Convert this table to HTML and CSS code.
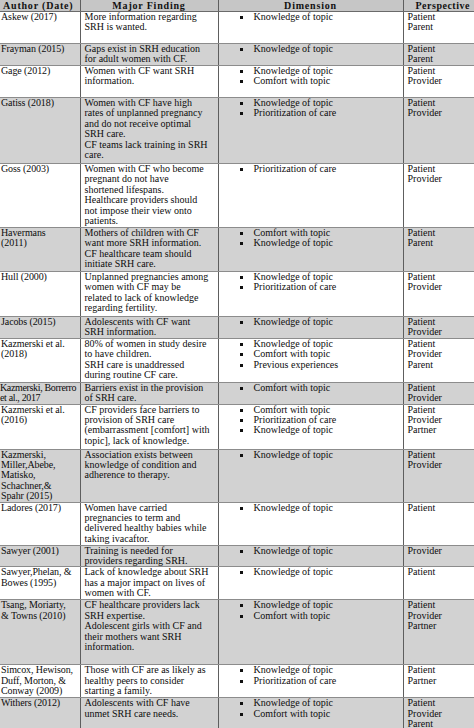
FILE: index.html
```html
<!DOCTYPE html>
<html>
<head>
<meta charset="utf-8">
<link rel="stylesheet" href="styles.css">
</head>
<body>
<table class="lit">
<colgroup><col class="c-auth"><col class="c-find"><col class="c-dim"><col class="c-per"></colgroup>
<thead>
<tr class="head"><th>Author (Date)</th><th>Major Finding</th><th>Dimension</th><th class="per">Perspective</th></tr>
</thead>
<tbody>
<tr class="w h32"><td>Askew (2017)</td><td>More information regarding<br>SRH is wanted.</td><td><ul><li>Knowledge of topic</li></ul></td><td>Patient<br>Parent</td></tr>
<tr class="g h22"><td>Frayman (2015)</td><td>Gaps exist in SRH education<br>for adult women with CF.</td><td><ul><li>Knowledge of topic</li></ul></td><td>Patient<br>Parent</td></tr>
<tr class="w h32"><td>Gage (2012)</td><td>Women with CF want SRH<br>information.</td><td><ul><li>Knowledge of topic</li><li>Comfort with topic</li></ul></td><td>Patient<br>Provider</td></tr>
<tr class="g h66"><td>Gatiss (2018)</td><td>Women with CF have high<br>rates of unplanned pregnancy<br>and do not receive optimal<br>SRH care.<br>CF teams lack training in SRH<br>care.</td><td><ul><li>Knowledge of topic</li><li>Prioritization of care</li></ul></td><td>Patient<br>Provider</td></tr>
<tr class="w h64"><td>Goss (2003)</td><td>Women with CF who become<br>pregnant do not have<br>shortened lifespans.<br>Healthcare providers should<br>not impose their view onto<br>patients.</td><td><ul><li>Prioritization of care</li></ul></td><td>Patient<br>Provider</td></tr>
<tr class="g h44"><td>Havermans<br>(2011)</td><td>Mothers of children with CF<br>want more SRH information.<br>CF healthcare team should<br>initiate SRH care.</td><td><ul><li>Comfort with topic</li><li>Knowledge of topic</li></ul></td><td>Patient<br>Parent</td></tr>
<tr class="w h45"><td>Hull (2000)</td><td>Unplanned pregnancies among<br>women with CF may be<br>related to lack of knowledge<br>regarding fertility.</td><td><ul><li>Knowledge of topic</li><li>Prioritization of care</li></ul></td><td>Patient<br>Provider</td></tr>
<tr class="g h20"><td>Jacobs (2015)</td><td>Adolescents with CF want<br>SRH information.</td><td><ul><li>Knowledge of topic</li></ul></td><td>Patient<br>Provider</td></tr>
<tr class="w h44"><td>Kazmerski et al.<br>(2018)</td><td>80% of women in study desire<br>to have children.<br>SRH care is unaddressed<br>during routine CF care.</td><td><ul><li>Knowledge of topic</li><li>Comfort with topic</li><li>Previous experiences</li></ul></td><td>Patient<br>Provider<br>Parent</td></tr>
<tr class="g h21"><td class="tight">Kazmerski, Borrerro<br>et al., 2017</td><td>Barriers exist in the provision<br>of SRH care.</td><td><ul><li>Comfort with topic</li></ul></td><td>Patient<br>Provider</td></tr>
<tr class="w h45"><td>Kazmerski et al.<br>(2016)</td><td>CF providers face barriers to<br>provision of SRH care<br>(embarrassment [comfort] with<br>topic], lack of knowledge.</td><td><ul><li>Comfort with topic</li><li>Prioritization of care</li><li>Knowledge of topic</li></ul></td><td>Patient<br>Provider<br>Partner</td></tr>
<tr class="g h53"><td>Kazmerski,<br>Miller,Abebe,<br>Matisko,<br>Schachner,&amp;<br>Spahr (2015)</td><td>Association exists between<br>knowledge of condition and<br>adherence to therapy.</td><td><ul><li>Knowledge of topic</li></ul></td><td>Patient<br>Provider</td></tr>
<tr class="w h43"><td>Ladores (2017)</td><td>Women have carried<br>pregnancies to term and<br>delivered healthy babies while<br>taking ivacaftor.</td><td><ul><li>Knowledge of topic</li></ul></td><td>Patient</td></tr>
<tr class="g h21"><td>Sawyer (2001)</td><td>Training is needed for<br>providers regarding SRH.</td><td><ul><li>Knowledge of topic</li></ul></td><td>Provider</td></tr>
<tr class="w h33"><td>Sawyer,Phelan, &amp;<br>Bowes (1995)</td><td>Lack of knowledge about SRH<br>has a major impact on lives of<br>women with CF.</td><td><ul><li>Knowledge of topic</li></ul></td><td>Patient</td></tr>
<tr class="g h65"><td>Tsang, Moriarty,<br>&amp; Towns (2010)</td><td>CF healthcare providers lack<br>SRH expertise.<br>Adolescent girls with CF and<br>their mothers want SRH<br>information.</td><td><ul><li>Knowledge of topic</li><li>Comfort with topic</li></ul></td><td>Patient<br>Provider<br>Partner</td></tr>
<tr class="w h33"><td>Simcox, Hewison,<br>Duff, Morton, &amp;<br>Conway (2009)</td><td>Those with CF are as likely as<br>healthy peers to consider<br>starting a family.</td><td><ul><li>Knowledge of topic</li><li>Prioritization of care</li></ul></td><td>Patient<br>Partner</td></tr>
<tr class="g h60"><td>Withers (2012)</td><td>Adolescents with CF have<br>unmet SRH care needs.</td><td><ul><li>Knowledge of topic</li><li>Comfort with topic</li></ul></td><td>Patient<br>Provider<br>Parent</td></tr>
</tbody>
</table>
</body>
</html>
```
FILE: styles.css
```css
html, body {
  margin: 0;
  padding: 0;
  background: #ffffff;
  overflow: hidden;
}
body {
  width: 474px;
  height: 728px;
}
.lit {
  border-collapse: collapse;
  table-layout: fixed;
  width: 498px;
  margin-left: -3px;
  font-family: "Liberation Serif", "Times New Roman", serif;
  font-size: 10px;
  line-height: 10.4px;
  color: #0d0d0d;
}
.c-auth { width: 83px; }
.c-find { width: 138px; }
.c-dim { width: 185px; }
.c-per { width: 92px; }
.lit th, .lit td {
  border-left: 1px solid #5e5e5e;
  border-right: 1px solid #5e5e5e;
  border-top: 1px solid #8c8c8c;
  border-bottom: 1px solid #8c8c8c;
  vertical-align: top;
  padding: 0 2px 0 4px;
  text-align: left;
  white-space: nowrap;
  overflow: hidden;
}
.lit td:first-child {
  padding-left: 4px;
  padding-right: 0;
  border-left: none;
  letter-spacing: -0.1px;
}
.lit td.tight {
  padding-left: 3px;
  letter-spacing: -0.35px;
}
.lit td:nth-child(3) { padding-left: 0; }
.head th {
  background: #c6c6c6;
  font-weight: bold;
  text-align: center;
  letter-spacing: 0.8px;
  height: 11px;
  padding: 0;
  line-height: 11px;
  color: #111;
  border-top: none;
  border-bottom: 1px solid #6a6a6a;
}
.head th:first-child { border-left: none; }
.head th.per {
  text-align: left;
  padding-left: 12px;
  letter-spacing: 0.5px;
}
.w { background: #ffffff; }
.g { background: #d2d2d2; }
.h20 { height: 20px; }
.h21 { height: 21px; }
.h22 { height: 22px; }
.h32 { height: 32px; }
.h33 { height: 33px; }
.h43 { height: 43px; }
.h44 { height: 44px; }
.h45 { height: 45px; }
.h53 { height: 53px; }
.h60 { height: 60px; }
.h64 { height: 64px; }
.h65 { height: 65px; }
.h66 { height: 66px; }
.lit ul {
  list-style: none;
  margin: 0;
  padding: 0 0 0 35px;
}
.lit li {
  position: relative;
}
.lit li::before {
  content: "";
  position: absolute;
  left: -14px;
  top: 4px;
  width: 3px;
  height: 3px;
  background: #111;
}
```
